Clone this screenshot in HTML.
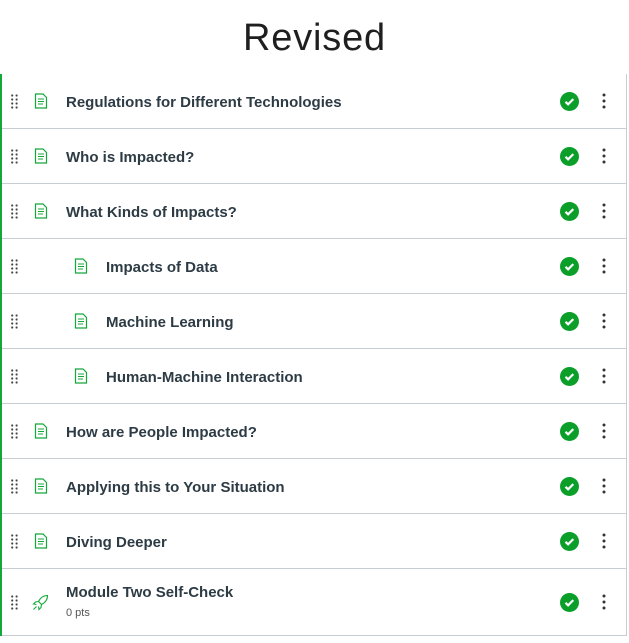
<!DOCTYPE html>
<html><head><style>
body{margin:0;background:#fff;font-family:"Liberation Sans",sans-serif;width:629px;height:643px;overflow:hidden;position:relative}
h1{position:absolute;top:0;left:0;width:629px;margin:0;text-align:center;font-weight:normal;font-size:38px;line-height:76px;color:#1f1f1f;letter-spacing:0.8px}
.list{position:absolute;top:74px;left:0;width:624px;border-left:2px solid #14a83a;border-right:1px solid #c7cdd1}
.row{position:relative;height:54px;border-bottom:1px solid #c7cdd1}
.row.last{height:66px}
.drag{position:absolute;left:9px;top:20px;width:7px;height:15px}
.icon{position:absolute;top:19px}
.t{position:absolute;top:2px;line-height:54px;font-size:15px;font-weight:bold;color:#2d3b45}
.chk{position:absolute;left:558px;top:18px;width:19px;height:19px;border-radius:50%;background:#0b9f2a}
.kebab{position:absolute;left:600px;top:19px;width:4px;height:16px}
</style></head><body>
<h1>Revised</h1>
<div class="list">
<script>
const items=[["Regulations for Different Technologies",0],["Who is Impacted?",0],["What Kinds of Impacts?",0],["Impacts of Data",1],["Machine Learning",1],["Human-Machine Interaction",1],["How are People Impacted?",0],["Applying this to Your Situation",0],["Diving Deeper",0]];
const drag='<svg class="drag" viewBox="0 0 7 15"><g fill="#4a4a4a">'+[0,4,8,12].map(y=>`<circle cx="1.2" cy="${y+1.5}" r="1.1"/><circle cx="5.6" cy="${y+1.5}" r="1.1"/>`).join('')+'</g></svg>';
const check='<div class="chk"><svg width="19" height="19" viewBox="0 0 19 19"><path d="M5.5 9.8l2.6 2.5 5.2-5.2" stroke="#fff" stroke-width="2.2" fill="none"/></svg></div>';
const keb='<svg class="kebab" viewBox="0 0 4 16"><g fill="#333"><circle cx="2" cy="2" r="1.5"/><circle cx="2" cy="8" r="1.5"/><circle cx="2" cy="14" r="1.5"/></g></svg>';
function page(x){return `<svg class="icon" style="left:${x}px" width="14" height="16" viewBox="0 0 14 16"><path d="M1.5 1h7.5l3.5 3.5V15h-11z" fill="none" stroke="#14a83a" stroke-width="1.2"/><path d="M4 6h6M4 8.5h6M4 11h5" stroke="#14a83a" stroke-width="1.1"/></svg>`}
let h='';
for(const [t,ind] of items){const ix=ind?72:32,tx=ind?104:64;h+=`<div class="row">${drag}${page(ix)}<div class="t" style="left:${tx}px">${t}</div>${check}${keb}</div>`;}
h+=`<div class="row last"><svg class="drag" style="top:26px" viewBox="0 0 7 15"><g fill="#4a4a4a">${[0,4,8,12].map(y=>`<circle cx="1.2" cy="${y+1.5}" r="1.1"/><circle cx="5.6" cy="${y+1.5}" r="1.1"/>`).join('')}</g></svg>
<svg class="icon" style="left:30px;top:25px" width="17" height="17" viewBox="0 0 17 17"><path d="M15.5 1.5c-4 0-7 2-9 6l3 3c4-2 6-5 6-9zM6.5 7.5l-3 .5-2 2 3 .5M9.5 10.5l-.5 3-2 2-.5-3M4.5 12.5l-3 3" fill="none" stroke="#14a83a" stroke-width="1.1"/></svg>
<div class="t" style="left:64px;top:10px;line-height:28px">Module Two Self-Check</div><div style="position:absolute;left:64px;top:38px;font-size:11px;color:#555">0 pts</div>
<div class="chk" style="top:24px"><svg width="19" height="19" viewBox="0 0 19 19"><path d="M5.5 9.8l2.6 2.5 5.2-5.2" stroke="#fff" stroke-width="2.2" fill="none"/></svg></div>
<svg class="kebab" style="top:25px" viewBox="0 0 4 16"><g fill="#333"><circle cx="2" cy="2" r="1.5"/><circle cx="2" cy="8" r="1.5"/><circle cx="2" cy="14" r="1.5"/></g></svg></div>`;
document.write(h);
</script>
</div>
</body></html>
